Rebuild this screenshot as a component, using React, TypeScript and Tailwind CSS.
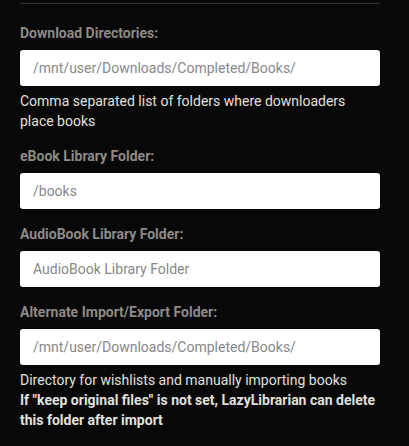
const fields = [
  {
    label: "Download Directories:",
    value: "/mnt/user/Downloads/Completed/Books/",
    help: "Comma separated list of folders where downloaders place books",
  },
  { label: "eBook Library Folder:", value: "/books" },
  { label: "AudioBook Library Folder:", placeholder: "AudioBook Library Folder" },
  {
    label: "Alternate Import/Export Folder:",
    value: "/mnt/user/Downloads/Completed/Books/",
    help: "Directory for wishlists and manually importing books",
    warn: 'If "keep original files" is not set, LazyLibrarian can delete this folder after import',
  },
];

export default function App() {
  return (
    <div className="min-h-screen bg-[#080808] font-['Roboto',sans-serif] text-sm">
      <div className="pl-5 pr-[29px] pt-[3px]">
        <div className="h-px bg-[#333]" />
        <div className="mt-[19px] flex flex-col">
          {fields.map((f) => (
            <div key={f.label} className="mb-[15px]">
              <label className="block font-bold leading-5 text-[#8d8a87]">
                {f.label}
              </label>
              <input
                readOnly
                defaultValue={f.value}
                placeholder={f.placeholder}
                className="mt-[7px] h-9 w-full rounded-[3px] bg-white pl-[13px] pr-3 text-sm text-[#888] placeholder:text-[#888] outline-none"
              />
              {f.help && (
                <p className="mt-[5px] leading-5 text-[#e2e0dd]">{f.help}</p>
              )}
              {f.warn && (
                <p className="font-bold leading-5 text-[#e2e0dd]">{f.warn}</p>
              )}
            </div>
          ))}
        </div>
      </div>
    </div>
  );
}
